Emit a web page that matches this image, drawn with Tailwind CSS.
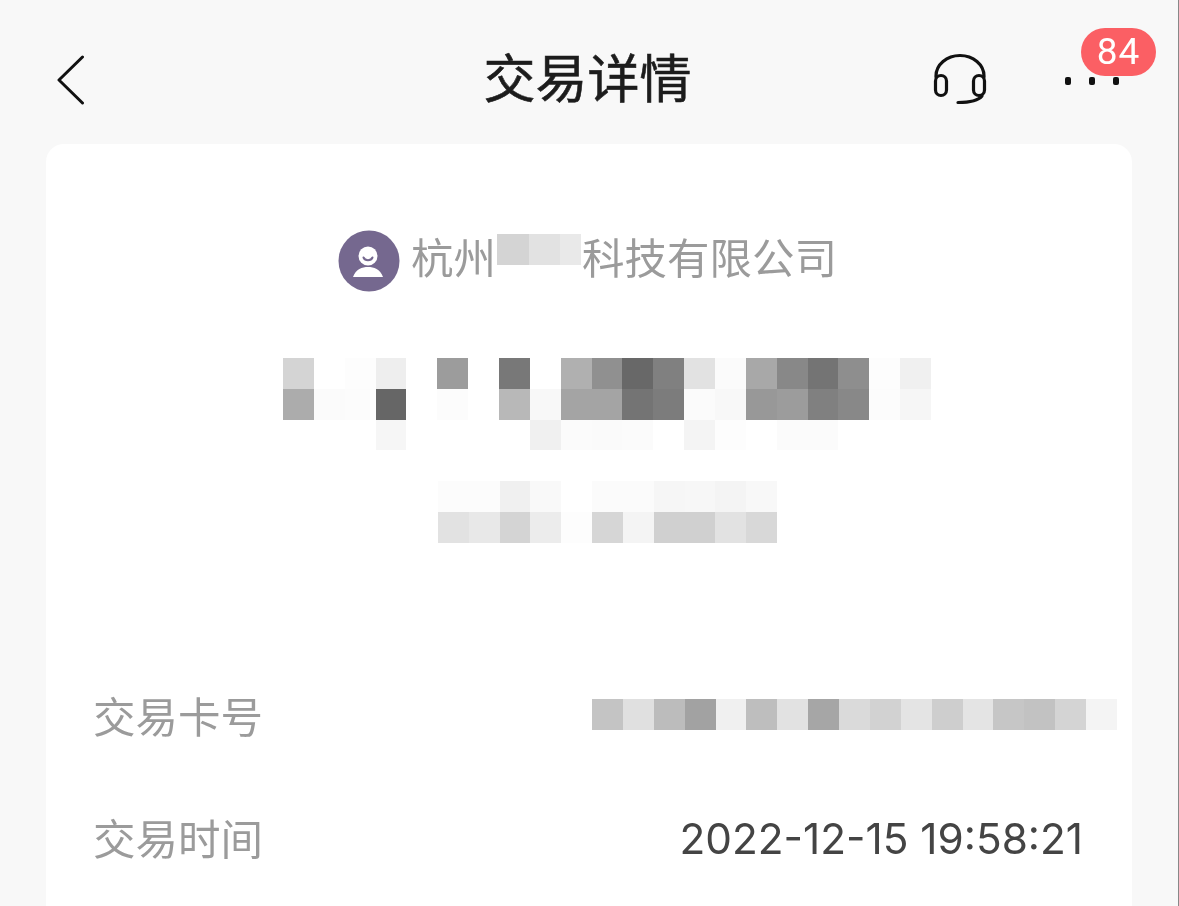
<!DOCTYPE html>
<html lang="zh-CN">
<head>
    <meta charset="UTF-8">
    <meta name="viewport" content="width=device-width, initial-scale=1.0">
    <title>交易详情</title>
    <script src="https://cdn.jsdelivr.net/npm/@tailwindcss/browser@4"></script>
</head>
<body class="bg-[#f8f8f8] h-[906px] overflow-hidden border-r border-[#888] font-['Inter','Noto_Sans_CJK_SC',sans-serif]">
    <!-- Top bar -->
    <header class="relative h-[144px] flex items-center justify-between pl-[57px] pr-[59px] pt-[16px] blur-[0.6px]">
        <svg class="w-[28px] h-[50px]" viewBox="0 0 28 50" fill="none" stroke="#111" stroke-width="3" stroke-linecap="round" stroke-linejoin="round">
            <path d="M25.5 2 L2 25 L25.5 48"/>
        </svg>
        <h1 class="absolute left-0 right-[3px] top-[45px] text-center text-[52px] leading-[62px] font-normal [-webkit-text-stroke:0.6px_#1c1c1c] text-[#1c1c1c] font-['Noto_Sans_CJK_SC',sans-serif]">交易详情</h1>
        <div class="flex items-center gap-[77px]">
            <svg class="w-[56px] h-[56px] mt-[2px]" viewBox="0 0 56 56" fill="none" stroke="#111" stroke-width="3.2" stroke-linecap="round">
                <path d="M4 24 V23 A24 20.5 0 0 1 52 23 V24"/>
                <rect x="3.5" y="22.5" width="11" height="20" rx="5.5"/>
                <rect x="41.5" y="22.5" width="11" height="20" rx="5.5"/>
                <path d="M50 43 C46 48 37 49.5 26 49.5"/>
            </svg>
            <div class="relative flex items-center gap-[18px] mt-[2px]">
                <span class="w-[6px] h-[8px] rounded-[2px] bg-[#111]"></span>
                <span class="w-[6px] h-[8px] rounded-[2px] bg-[#111]"></span>
                <span class="w-[6px] h-[8px] rounded-[2px] bg-[#111]"></span>
                <span class="absolute left-[16px] top-[-49px] w-[75px] h-[48px] rounded-full bg-[#fb5f64] text-white text-[37px] leading-[48px] font-normal text-center font-['Roboto',sans-serif] tracking-[1px]">84</span>
            </div>
        </div>
    </header>

    <!-- Card -->
    <main class="ml-[46px] mr-[46px] h-[800px] bg-white rounded-t-[18px] pt-[86px] blur-[0.6px] font-['Noto_Sans_CJK_SC',sans-serif]">
        <!-- Merchant -->
        <div class="flex items-center h-[62px] ml-[292px] text-[42.5px] leading-[62px] text-[#9b9b9b]">
            <svg class="w-[62px] h-[62px] shrink-0" viewBox="0 0 62 62">
                <circle cx="31" cy="31" r="30.5" fill="#75688f"/>
                <circle cx="30" cy="26" r="9.5" fill="#fff"/>
                <path d="M25.5 27.5 C27 31 33 31 34.5 27.5" fill="none" stroke="#75688f" stroke-width="2" stroke-linecap="round"/>
                <path d="M15 47 C18 39 24 37 30 37 C36 37 42 39 45 47 Z" fill="#fff"/>
            </svg>
            <span class="ml-[11px] w-[86px] mb-[10px]">杭州</span>
            <div class="grid grid-cols-[32px_31px_21px] h-[31px] mt-[-23px] mr-[1px] blur-[0.6px]">
                <div class="bg-[#d4d4d4]"></div>
                <div class="bg-[#e2e2e2]"></div>
                <div class="bg-[#e9e9e9]"></div>
            </div>
            <span class="mb-[10px]">科技有限公司</span>
        </div>

        <!-- Amount, mosaic -->
        <div class="mt-[66px] ml-[237px] w-[648px] grid grid-cols-[repeat(21,1fr)] auto-rows-[30.8px] blur-[0.6px]">
            <div class="bg-[#d4d4d4]"></div><div class="bg-white"></div><div class="bg-[#fdfdfd]"></div><div class="bg-[#eeeeee]"></div><div class="bg-white"></div><div class="bg-[#9c9c9c]"></div><div class="bg-white"></div><div class="bg-[#787878]"></div><div class="bg-white"></div><div class="bg-[#b0b0b0]"></div><div class="bg-[#909090]"></div><div class="bg-[#686868]"></div><div class="bg-[#808080]"></div><div class="bg-[#e2e2e2]"></div><div class="bg-[#fbfbfb]"></div><div class="bg-[#a8a8a8]"></div><div class="bg-[#888888]"></div><div class="bg-[#747474]"></div><div class="bg-[#8e8e8e]"></div><div class="bg-[#fdfdfd]"></div><div class="bg-[#f0f0f0]"></div>
            <div class="bg-[#acacac]"></div><div class="bg-[#fbfbfb]"></div><div class="bg-[#fcfcfc]"></div><div class="bg-[#666666]"></div><div class="bg-white"></div><div class="bg-[#fcfcfc]"></div><div class="bg-white"></div><div class="bg-[#b8b8b8]"></div><div class="bg-[#f8f8f8]"></div><div class="bg-[#a4a4a4]"></div><div class="bg-[#a4a4a4]"></div><div class="bg-[#747474]"></div><div class="bg-[#7c7c7c]"></div><div class="bg-[#fbfbfb]"></div><div class="bg-[#f8f8f8]"></div><div class="bg-[#989898]"></div><div class="bg-[#9c9c9c]"></div><div class="bg-[#808080]"></div><div class="bg-[#888888]"></div><div class="bg-[#fcfcfc]"></div><div class="bg-[#f6f6f6]"></div>
            <div class="bg-white"></div><div class="bg-white"></div><div class="bg-white"></div><div class="bg-[#f6f6f6]"></div><div class="bg-white"></div><div class="bg-white"></div><div class="bg-white"></div><div class="bg-white"></div><div class="bg-[#f0f0f0]"></div><div class="bg-[#fbfbfb]"></div><div class="bg-[#fafafa]"></div><div class="bg-[#fbfbfb]"></div><div class="bg-white"></div><div class="bg-[#f4f4f4]"></div><div class="bg-[#fdfdfd]"></div><div class="bg-white"></div><div class="bg-[#fbfbfb]"></div><div class="bg-[#fbfbfb]"></div><div class="bg-white"></div><div class="bg-white"></div><div class="bg-white"></div>
        </div>

        <!-- Status, mosaic -->
        <div class="mt-[31px] ml-[392px] w-[339px] grid grid-cols-[repeat(11,1fr)] auto-rows-[31px] blur-[0.6px]">
            <div class="bg-[#fcfcfc]"></div><div class="bg-[#fcfcfc]"></div><div class="bg-[#f0f0f0]"></div><div class="bg-[#f9f9f9]"></div><div class="bg-white"></div><div class="bg-[#fbfbfb]"></div><div class="bg-[#fbfbfb]"></div><div class="bg-[#f6f6f6]"></div><div class="bg-[#f7f7f7]"></div><div class="bg-[#f4f4f4]"></div><div class="bg-[#f8f8f8]"></div>
            <div class="bg-[#e2e2e2]"></div><div class="bg-[#e8e8e8]"></div><div class="bg-[#d4d4d4]"></div><div class="bg-[#ececec]"></div><div class="bg-[#fdfdfd]"></div><div class="bg-[#d6d6d6]"></div><div class="bg-[#f4f4f4]"></div><div class="bg-[#d0d0d0]"></div><div class="bg-[#d0d0d0]"></div><div class="bg-[#e2e2e2]"></div><div class="bg-[#d8d8d8]"></div>
        </div>

        <!-- Detail rows -->
        <div class="mt-[141px] pl-[47px] pr-[49px] text-[42.5px] leading-[62px] text-[#9b9b9b]">
            <div class="flex items-center justify-between h-[62px]">
                <span>交易卡号</span>
                <div class="w-[525px] mr-[-34px] mt-[-2px] grid grid-cols-[repeat(17,1fr)] auto-rows-[31px] blur-[0.6px]">
                    <div class="bg-[#c4c4c4]"></div><div class="bg-[#e0e0e0]"></div><div class="bg-[#bcbcbc]"></div><div class="bg-[#a2a2a2]"></div><div class="bg-[#f0f0f0]"></div><div class="bg-[#bebebe]"></div><div class="bg-[#e2e2e2]"></div><div class="bg-[#a6a6a6]"></div><div class="bg-[#dadada]"></div><div class="bg-[#d2d2d2]"></div><div class="bg-[#e4e4e4]"></div><div class="bg-[#cecece]"></div><div class="bg-[#e4e4e4]"></div><div class="bg-[#c6c6c6]"></div><div class="bg-[#c2c2c2]"></div><div class="bg-[#d4d4d4]"></div><div class="bg-[#f4f4f4]"></div>
                </div>
            </div>
            <div class="flex items-center justify-between h-[62px] mt-[60px]">
                <span>交易时间</span>
                <span class="mt-[4px] text-[42.3px] text-[#444] font-['Inter',sans-serif]">2022-12-15 19:58:21</span>
            </div>
        </div>
    </main>
</body>
</html>
